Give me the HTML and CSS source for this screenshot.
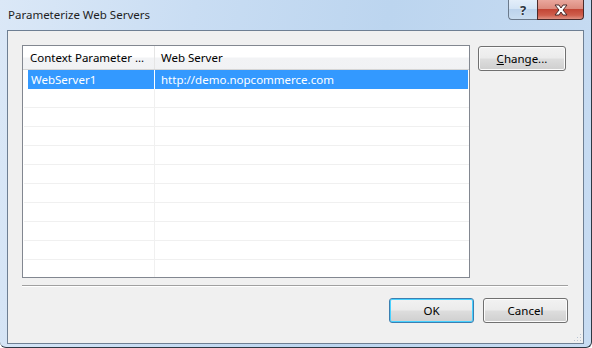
FILE: index.html
```html
<!DOCTYPE html>
<html lang="en">
<head>
    <meta charset="UTF-8">
    <title>Parameterize Web Servers</title>
    <link rel="stylesheet" href="styles.css">
</head>
<body>
    <div class="window">
        <div class="titlebar">
            <span class="title">Parameterize Web Servers</span>
            <div class="caption-buttons">
                <div class="cap help">?</div>
                <div class="cap close">
                    <svg width="18" height="12" viewBox="0 0 18 12">
                        <path d="M3 1 L7 1 L9 4 L11 1 L15 1 L11 6 L15 11 L11 11 L9 8 L7 11 L3 11 L7 6 Z" fill="#fff" stroke="#4a2a2a" stroke-width="1" stroke-linejoin="round"/>
                    </svg>
                </div>
            </div>
        </div>

        <div class="client">
            <div class="main">
                <div class="listview">
                    <div class="lv-header">
                        <div class="col c1">Context Parameter ...</div>
                        <div class="col c2">Web Server</div>
                    </div>
                    <div class="lv-body">
                        <div class="row selected">
                            <div class="col c1">WebServer1</div>
                            <div class="col c2">http://demo.nopcommerce.com</div>
                        </div>
                        <div class="row"><div class="col c1"></div><div class="col c2"></div></div>
                        <div class="row"><div class="col c1"></div><div class="col c2"></div></div>
                        <div class="row"><div class="col c1"></div><div class="col c2"></div></div>
                        <div class="row"><div class="col c1"></div><div class="col c2"></div></div>
                        <div class="row"><div class="col c1"></div><div class="col c2"></div></div>
                        <div class="row"><div class="col c1"></div><div class="col c2"></div></div>
                        <div class="row"><div class="col c1"></div><div class="col c2"></div></div>
                        <div class="row"><div class="col c1"></div><div class="col c2"></div></div>
                        <div class="row"><div class="col c1"></div><div class="col c2"></div></div>
                        <div class="row"><div class="col c1"></div><div class="col c2"></div></div>
                    </div>
                </div>
                <button class="btn change"><u>C</u>hange...</button>
            </div>

            <div class="separator"></div>

            <div class="footer">
                <button class="btn default">OK</button>
                <button class="btn">Cancel</button>
            </div>

            <svg class="grip" width="10" height="10" viewBox="0 0 10 10">
                <rect x="8" y="2" width="1" height="1" fill="#b8c4d4"/>
                <rect x="5" y="5" width="1" height="1" fill="#b8c4d4"/>
                <rect x="8" y="5" width="1" height="1" fill="#b8c4d4"/>
                <rect x="2" y="8" width="1" height="1" fill="#b8c4d4"/>
                <rect x="5" y="8" width="1" height="1" fill="#b8c4d4"/>
                <rect x="8" y="8" width="1" height="1" fill="#b8c4d4"/>
            </svg>
        </div>
    </div>
</body>
</html>
```

FILE: styles.css
```css
body {
    margin: 0;
    font-family: "Noto Sans", "Open Sans", sans-serif;
    font-size: 11.5px;
    color: #000;
    background: #fff;
}
.window {
    box-sizing: border-box;
    width: 592px;
    height: 348px;
    display: flex;
    flex-direction: column;
    padding: 0 7px 3px 7px;
    background: linear-gradient(100deg, #dbe8f7 0%, #c9ddf3 30%, #bcd5ef 60%, #c8dcf2 100%);
    border-right: 1px solid #2e3843;
    border-bottom: 1px solid #2e3843;
    border-radius: 0 0 6px 6px;
}
.titlebar {
    height: 30px;
    display: flex;
    align-items: flex-start;
    justify-content: space-between;
}
.title {
    margin-top: 7px;
    margin-left: 1px;
    color: #1e1e1e;
}
.caption-buttons {
    display: flex;
}
.cap {
    height: 20px;
    box-sizing: border-box;
    display: flex;
    align-items: center;
    justify-content: center;
    border: 1px solid #6b7a8c;
    border-top: none;
}
.help {
    width: 29px;
    border-radius: 0 0 0 4px;
    border-right: none;
    background: linear-gradient(#e3eefa 0%, #d4e4f5 45%, #bcd3ec 50%, #c9ddf1 100%);
    color: #2b3440;
    font-size: 13px;
    font-weight: bold;
    text-shadow: 0 0 2px #fff;
}
.close {
    width: 47px;
    border-radius: 0 0 4px 0;
    border-color: #4b2b2b;
    background: linear-gradient(#e9a79d 0%, #dc8b7e 45%, #c34636 50%, #cf5e4c 80%, #e09183 100%);
}
.client {
    position: relative;
    flex: 1;
    display: flex;
    flex-direction: column;
    background: #f0f0f0;
    border: 1px solid #6e7f93;
    padding: 14px 15px 0 14px;
}
.main {
    display: flex;
    align-items: flex-start;
    gap: 8px;
}
.listview {
    box-sizing: border-box;
    width: 448px;
    height: 233px;
    border: 1px solid #828790;
    background: #fff;
    overflow: hidden;
}
.lv-header {
    display: flex;
    height: 23px;
    border-bottom: 1px solid #d5d5d5;
    background: linear-gradient(#ffffff 0%, #ffffff 48%, #f2f3f5 52%, #f1f2f4 100%);
}
.lv-header .col {
    line-height: 23px;
    padding-left: 7px;
}
.col.c1 {
    box-sizing: border-box;
    width: 132px;
    border-right: 1px solid #e5e5e5;
}
.col.c2 {
    flex: 1;
    padding-left: 6px;
}
.row {
    display: flex;
    height: 18px;
    border-bottom: 1px solid #f0f0f0;
    margin-left: 1px;
}
.row .col {
    line-height: 18px;
}
.row .col.c1 {
    width: 131px;
    padding-left: 6px;
    border-right-color: #f0f0f0;
}
.row.selected {
    height: 19px;
    border-bottom: none;
}
.row.selected .col {
    background: #3399ff;
    color: #fff;
    line-height: 19px;
}
.row.selected .col.c1 {
    margin-left: 4px;
    width: 127px;
    padding-left: 3px;
    border-right: 1px solid #fff;
}
.row.selected .col.c2 {
    margin-right: 1px;
}
.btn {
    box-sizing: border-box;
    height: 25px;
    font-family: inherit;
    font-size: 11.5px;
    color: #000;
    border: 1px solid #707070;
    border-radius: 3px;
    background: linear-gradient(#f2f2f2 0%, #ebebeb 48%, #dddddd 52%, #cfcfcf 100%);
    box-shadow: inset 0 0 0 1px #fcfcfc;
    padding: 0;
}
.change {
    width: 88px;
    margin-top: 1px;
}
.separator {
    margin-top: 7px;
    border-top: 1px solid #a0a0a0;
    border-bottom: 1px solid #ffffff;
}
.footer {
    display: flex;
    justify-content: flex-end;
    gap: 9px;
    margin-top: 11px;
}
.footer .btn {
    width: 85px;
}
.footer .btn.default {
    border-color: #3c7fb1;
    box-shadow: inset 0 0 0 1px #48d1ff;
}
.grip {
    position: absolute;
    right: 1px;
    bottom: 1px;
}
```
